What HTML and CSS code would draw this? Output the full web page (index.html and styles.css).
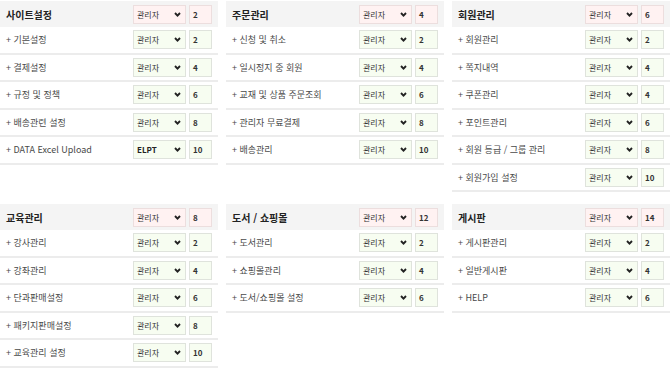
FILE: index.html
```html
<!DOCTYPE html>
<html lang="ko">
<head>
  <meta charset="UTF-8" />
  <title>관리자 권한 설정</title>
  <link rel="stylesheet" href="styles.css">
</head>
<body>
  <div class="board">

    <section class="menu">
      <div class="menu-head">
        <span class="name">사이트설정</span>
        <div class="perm"><div class="sel">관리자<svg viewBox="0 0 7 5"><polyline points="1,1 3.5,3.6 6,1"/></svg></div><div class="num">2</div></div>
      </div>
      <div class="menu-row">
        <span class="label">+ 기본설정</span>
        <div class="perm"><div class="sel">관리자<svg viewBox="0 0 7 5"><polyline points="1,1 3.5,3.6 6,1"/></svg></div><div class="num">2</div></div>
      </div>
      <div class="menu-row">
        <span class="label">+ 결제설정</span>
        <div class="perm"><div class="sel">관리자<svg viewBox="0 0 7 5"><polyline points="1,1 3.5,3.6 6,1"/></svg></div><div class="num">4</div></div>
      </div>
      <div class="menu-row">
        <span class="label">+ 규정 및 정책</span>
        <div class="perm"><div class="sel">관리자<svg viewBox="0 0 7 5"><polyline points="1,1 3.5,3.6 6,1"/></svg></div><div class="num">6</div></div>
      </div>
      <div class="menu-row">
        <span class="label">+ 배송관련 설정</span>
        <div class="perm"><div class="sel">관리자<svg viewBox="0 0 7 5"><polyline points="1,1 3.5,3.6 6,1"/></svg></div><div class="num">8</div></div>
      </div>
      <div class="menu-row">
        <span class="label">+ DATA Excel Upload</span>
        <div class="perm"><div class="sel bold">ELPT<svg viewBox="0 0 7 5"><polyline points="1,1 3.5,3.6 6,1"/></svg></div><div class="num">10</div></div>
      </div>
    </section>

    <section class="menu">
      <div class="menu-head">
        <span class="name">주문관리</span>
        <div class="perm"><div class="sel">관리자<svg viewBox="0 0 7 5"><polyline points="1,1 3.5,3.6 6,1"/></svg></div><div class="num">4</div></div>
      </div>
      <div class="menu-row">
        <span class="label">+ 신청 및 취소</span>
        <div class="perm"><div class="sel">관리자<svg viewBox="0 0 7 5"><polyline points="1,1 3.5,3.6 6,1"/></svg></div><div class="num">2</div></div>
      </div>
      <div class="menu-row">
        <span class="label">+ 일시정지 중 회원</span>
        <div class="perm"><div class="sel">관리자<svg viewBox="0 0 7 5"><polyline points="1,1 3.5,3.6 6,1"/></svg></div><div class="num">4</div></div>
      </div>
      <div class="menu-row">
        <span class="label">+ 교재 및 상품 주문조회</span>
        <div class="perm"><div class="sel">관리자<svg viewBox="0 0 7 5"><polyline points="1,1 3.5,3.6 6,1"/></svg></div><div class="num">6</div></div>
      </div>
      <div class="menu-row">
        <span class="label">+ 관리자 무료결제</span>
        <div class="perm"><div class="sel">관리자<svg viewBox="0 0 7 5"><polyline points="1,1 3.5,3.6 6,1"/></svg></div><div class="num">8</div></div>
      </div>
      <div class="menu-row">
        <span class="label">+ 배송관리</span>
        <div class="perm"><div class="sel">관리자<svg viewBox="0 0 7 5"><polyline points="1,1 3.5,3.6 6,1"/></svg></div><div class="num">10</div></div>
      </div>
    </section>

    <section class="menu">
      <div class="menu-head">
        <span class="name">회원관리</span>
        <div class="perm"><div class="sel">관리자<svg viewBox="0 0 7 5"><polyline points="1,1 3.5,3.6 6,1"/></svg></div><div class="num">6</div></div>
      </div>
      <div class="menu-row">
        <span class="label">+ 회원관리</span>
        <div class="perm"><div class="sel">관리자<svg viewBox="0 0 7 5"><polyline points="1,1 3.5,3.6 6,1"/></svg></div><div class="num">2</div></div>
      </div>
      <div class="menu-row">
        <span class="label">+ 쪽지내역</span>
        <div class="perm"><div class="sel">관리자<svg viewBox="0 0 7 5"><polyline points="1,1 3.5,3.6 6,1"/></svg></div><div class="num">4</div></div>
      </div>
      <div class="menu-row">
        <span class="label">+ 쿠폰관리</span>
        <div class="perm"><div class="sel">관리자<svg viewBox="0 0 7 5"><polyline points="1,1 3.5,3.6 6,1"/></svg></div><div class="num">4</div></div>
      </div>
      <div class="menu-row">
        <span class="label">+ 포인트관리</span>
        <div class="perm"><div class="sel">관리자<svg viewBox="0 0 7 5"><polyline points="1,1 3.5,3.6 6,1"/></svg></div><div class="num">6</div></div>
      </div>
      <div class="menu-row">
        <span class="label">+ 회원 등급 / 그룹 관리</span>
        <div class="perm"><div class="sel">관리자<svg viewBox="0 0 7 5"><polyline points="1,1 3.5,3.6 6,1"/></svg></div><div class="num">8</div></div>
      </div>
      <div class="menu-row">
        <span class="label">+ 회원가입 설정</span>
        <div class="perm"><div class="sel">관리자<svg viewBox="0 0 7 5"><polyline points="1,1 3.5,3.6 6,1"/></svg></div><div class="num">10</div></div>
      </div>
    </section>

    <section class="menu">
      <div class="menu-head">
        <span class="name">교육관리</span>
        <div class="perm"><div class="sel">관리자<svg viewBox="0 0 7 5"><polyline points="1,1 3.5,3.6 6,1"/></svg></div><div class="num">8</div></div>
      </div>
      <div class="menu-row">
        <span class="label">+ 강사관리</span>
        <div class="perm"><div class="sel">관리자<svg viewBox="0 0 7 5"><polyline points="1,1 3.5,3.6 6,1"/></svg></div><div class="num">2</div></div>
      </div>
      <div class="menu-row">
        <span class="label">+ 강좌관리</span>
        <div class="perm"><div class="sel">관리자<svg viewBox="0 0 7 5"><polyline points="1,1 3.5,3.6 6,1"/></svg></div><div class="num">4</div></div>
      </div>
      <div class="menu-row">
        <span class="label">+ 단과판매설정</span>
        <div class="perm"><div class="sel">관리자<svg viewBox="0 0 7 5"><polyline points="1,1 3.5,3.6 6,1"/></svg></div><div class="num">6</div></div>
      </div>
      <div class="menu-row">
        <span class="label">+ 패키지판매설정</span>
        <div class="perm"><div class="sel">관리자<svg viewBox="0 0 7 5"><polyline points="1,1 3.5,3.6 6,1"/></svg></div><div class="num">8</div></div>
      </div>
      <div class="menu-row">
        <span class="label">+ 교육관리 설정</span>
        <div class="perm"><div class="sel">관리자<svg viewBox="0 0 7 5"><polyline points="1,1 3.5,3.6 6,1"/></svg></div><div class="num">10</div></div>
      </div>
    </section>

    <section class="menu">
      <div class="menu-head">
        <span class="name">도서 / 쇼핑몰</span>
        <div class="perm"><div class="sel">관리자<svg viewBox="0 0 7 5"><polyline points="1,1 3.5,3.6 6,1"/></svg></div><div class="num">12</div></div>
      </div>
      <div class="menu-row">
        <span class="label">+ 도서관리</span>
        <div class="perm"><div class="sel">관리자<svg viewBox="0 0 7 5"><polyline points="1,1 3.5,3.6 6,1"/></svg></div><div class="num">2</div></div>
      </div>
      <div class="menu-row">
        <span class="label">+ 쇼핑몰관리</span>
        <div class="perm"><div class="sel">관리자<svg viewBox="0 0 7 5"><polyline points="1,1 3.5,3.6 6,1"/></svg></div><div class="num">4</div></div>
      </div>
      <div class="menu-row">
        <span class="label">+ 도서/쇼핑몰 설정</span>
        <div class="perm"><div class="sel">관리자<svg viewBox="0 0 7 5"><polyline points="1,1 3.5,3.6 6,1"/></svg></div><div class="num">6</div></div>
      </div>
    </section>

    <section class="menu">
      <div class="menu-head">
        <span class="name">게시판</span>
        <div class="perm"><div class="sel">관리자<svg viewBox="0 0 7 5"><polyline points="1,1 3.5,3.6 6,1"/></svg></div><div class="num">14</div></div>
      </div>
      <div class="menu-row">
        <span class="label">+ 게시판관리</span>
        <div class="perm"><div class="sel">관리자<svg viewBox="0 0 7 5"><polyline points="1,1 3.5,3.6 6,1"/></svg></div><div class="num">2</div></div>
      </div>
      <div class="menu-row">
        <span class="label">+ 일반게시판</span>
        <div class="perm"><div class="sel">관리자<svg viewBox="0 0 7 5"><polyline points="1,1 3.5,3.6 6,1"/></svg></div><div class="num">4</div></div>
      </div>
      <div class="menu-row">
        <span class="label">+ HELP</span>
        <div class="perm"><div class="sel">관리자<svg viewBox="0 0 7 5"><polyline points="1,1 3.5,3.6 6,1"/></svg></div><div class="num">6</div></div>
      </div>
    </section>

  </div>
</body>
</html>
```

FILE: styles.css
```css
html, body {
  margin: 0;
  background: #fff;
}
body {
  font-family: "Noto Sans CJK KR", "Noto Sans", sans-serif;
  color: #444;
  overflow: hidden;
}
.board {
  display: grid;
  grid-template-columns: repeat(3, 218px);
  column-gap: 8px;
  row-gap: 12px;
  align-items: start;
  padding-top: 1px;
}
.menu-head,
.menu-row {
  display: flex;
  align-items: center;
  justify-content: space-between;
  padding: 0 6px;
}
.menu-head {
  height: 26px;
  background: #f4f4f4;
}
.menu-row {
  height: 25.5px;
  border-bottom: 2px solid #ececec;
}
.name {
  font-size: 10px;
  font-weight: bold;
  color: #222;
}
.label {
  font-size: 9px;
  color: #4a4a4a;
}
.perm {
  display: flex;
  gap: 3px;
}
.sel,
.num {
  box-sizing: border-box;
  height: 19px;
  display: flex;
  align-items: center;
  font-size: 8px;
  color: #333;
  background: #f7fdf1;
  border: 1px solid #dfe3dc;
}
.sel {
  width: 53px;
  padding: 0 4px 0 3px;
  justify-content: space-between;
}
.sel.bold {
  font-weight: bold;
  color: #222;
}
.sel svg {
  width: 7px;
  height: 5px;
  fill: none;
  stroke: #222;
  stroke-width: 1.9;
}
.num {
  width: 23px;
  padding-left: 3px;
  font-weight: bold;
}
.menu-head .sel,
.menu-head .num {
  background: #fff2f2;
  border-color: #ecdede;
}
```
